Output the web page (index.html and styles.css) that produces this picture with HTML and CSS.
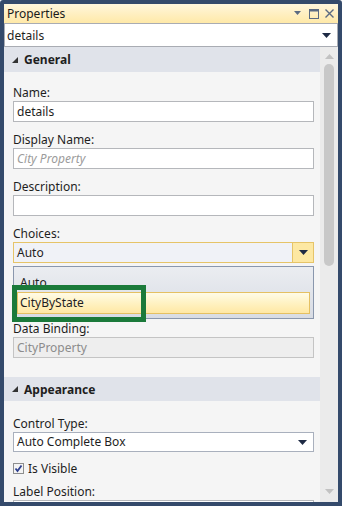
FILE: index.html
```html
<!DOCTYPE html>
<html>
<head>
<meta charset="utf-8">
<link rel="stylesheet" href="styles.css">
</head>
<body>
<div class="window">
  <div class="titlebar">
    <span class="title">Properties</span>
    <div class="tb-btns">
      <svg class="tb-pin" width="8" height="5" viewBox="0 0 8 5"><polygon points="0,0 7,0 3.5,4" fill="#5b6a82"/></svg>
      <svg class="tb-max" width="10" height="10" viewBox="0 0 10 10"><rect x="0.5" y="0.5" width="9" height="9" fill="none" stroke="#5b6a82"/><rect x="0" y="0" width="10" height="2.5" fill="#5b6a82"/></svg>
      <svg class="tb-close" width="9" height="9" viewBox="0 0 9 9"><path d="M0.5 0.5 L8.5 8.5 M8.5 0.5 L0.5 8.5" stroke="#5b6a82" stroke-width="1.4"/></svg>
    </div>
  </div>
  <div class="selector">
    <span>details</span>
    <svg width="9" height="5" viewBox="0 0 9 5"><polygon points="0,0 9,0 4.5,5" fill="#1e2a44"/></svg>
  </div>
  <div class="body">
    <div class="content">
      <div class="section-header">
        <svg width="6" height="6" viewBox="0 0 6 6"><polygon points="6,0 6,6 0,6" fill="#333"/></svg>
        <span>General</span>
      </div>
      <div class="fields general">
        <div class="field">
          <div class="label">Name:</div>
          <div class="input">details</div>
        </div>
        <div class="field">
          <div class="label">Display Name:</div>
          <div class="input placeholder">City Property</div>
        </div>
        <div class="field">
          <div class="label">Description:</div>
          <div class="input"></div>
        </div>
        <div class="field choices">
          <div class="label">Choices:</div>
          <div class="combo active">
            <span class="combo-text">Auto</span>
            <div class="drop-btn"><svg width="9" height="5" viewBox="0 0 9 5"><polygon points="0,0 9,0 4.5,5" fill="#1e2a44"/></svg></div>
          </div>
          <div class="popup">
            <div class="opt">Auto</div>
            <div class="opt sel">CityByState</div>
            <div class="highlight"></div>
          </div>
        </div>
        <div class="field binding">
          <div class="label">Data Binding:</div>
          <div class="input disabled">CityProperty</div>
        </div>
      </div>
      <div class="section-header appearance">
        <svg width="6" height="6" viewBox="0 0 6 6"><polygon points="6,0 6,6 0,6" fill="#333"/></svg>
        <span>Appearance</span>
      </div>
      <div class="fields appear">
        <div class="field">
          <div class="label">Control Type:</div>
          <div class="combo plain">
            <span class="combo-text">Auto Complete Box</span>
            <div class="drop-plain"><svg width="9" height="5" viewBox="0 0 9 5"><polygon points="0,0 9,0 4.5,5" fill="#1e2a44"/></svg></div>
          </div>
        </div>
        <div class="check-row">
          <svg width="11" height="11" viewBox="0 0 11 11">
            <rect x="0.5" y="0.5" width="10" height="10" fill="#f4f4f4" stroke="#8e8f8f"/>
            <path d="M2.5 5.5 L4.5 8 L8.5 2.5" fill="none" stroke="#2d3f8f" stroke-width="1.8"/>
          </svg>
          <span>Is Visible</span>
        </div>
        <div class="field">
          <div class="label">Label Position:</div>
          <div class="input"></div>
        </div>
      </div>
    </div>
    <div class="scrollbar">
      <svg class="sb-arrow up" width="9" height="5" viewBox="0 0 9 5"><polygon points="4.5,0 9,5 0,5" fill="#c2c2c2"/></svg>
      <div class="thumb"></div>
      <div class="sb-spacer"></div>
      <svg class="sb-arrow down" width="9" height="5" viewBox="0 0 9 5"><polygon points="0,0 9,0 4.5,5" fill="#c2c2c2"/></svg>
    </div>
  </div>
</div>
</body>
</html>
```

FILE: styles.css
```css
* { box-sizing: border-box; }
html, body {
  margin: 0;
  padding: 0;
  background: #ffffff;
}
body {
  font-family: "Segoe UI", "Noto Sans", "Open Sans", sans-serif;
  font-size: 12px;
  color: #1e1e1e;
}
.window {
  width: 342px;
  height: 506px;
  border: 4px solid #344a6b;
  border-radius: 3px 3px 0 0;
  display: flex;
  flex-direction: column;
  background: #f5f5f5;
  overflow: hidden;
}
.titlebar {
  height: 19px;
  flex: none;
  display: flex;
  align-items: center;
  justify-content: space-between;
  padding: 0 4px 0 3px;
  background: linear-gradient(#fff6dc, #ffe9a8);
}
.title {
  color: #1a1a1a;
  line-height: 19px;
}
.tb-btns {
  display: flex;
  align-items: center;
  gap: 6px;
}
.tb-pin { margin-right: 1px; }
.selector {
  height: 24px;
  flex: none;
  display: flex;
  align-items: center;
  justify-content: space-between;
  padding: 0 6px 0 2px;
  background: #ffffff;
  border: 1px solid #a9acb3;
}
.body {
  flex: 1;
  display: flex;
  min-height: 0;
}
.content {
  flex: 1;
  overflow: hidden;
  background: #f5f5f5;
}
.section-header {
  height: 25px;
  display: flex;
  align-items: center;
  gap: 6px;
  padding-left: 8px;
  background: #e0e3ea;
  font-weight: bold;
  color: #1e1e1e;
}
.section-header.appearance {
  height: 24px;
  margin-top: 19px;
}
.fields {
  padding: 12px 6px 0 9px;
  display: flex;
  flex-direction: column;
}
.fields.appear { padding-top: 14px; }
.field {
  display: flex;
  flex-direction: column;
  margin-bottom: 9px;
}
.field.choices { margin-bottom: 1px; position: relative; }
.label {
  height: 17px;
  line-height: 17px;
  color: #1e1e1e;
}
.input {
  height: 21px;
  line-height: 19px;
  padding: 0 3px;
  background: #ffffff;
  border: 1px solid #b5b7bb;
  color: #1e1e1e;
}
.input.placeholder {
  color: #9b9b9b;
  font-style: italic;
}
.input.disabled {
  background: #eeeeee;
  border-color: #c4c4c4;
  color: #8c8c8c;
}
.combo {
  height: 21px;
  display: flex;
  align-items: stretch;
  border: 1px solid #b5b7bb;
  background: #ffffff;
}
.combo.plain { height: 20px; border-color: #a9b0bd; }
.combo.active {
  border-color: #e6c468;
  background: #f0f2f7;
}
.combo-text {
  flex: 1;
  line-height: 19px;
  padding-left: 3px;
}
.combo.plain .combo-text { line-height: 18px; }
.drop-btn {
  width: 21px;
  display: flex;
  align-items: center;
  justify-content: center;
  background: #fde8a3;
  border-left: 1px solid #e6c468;
}
.drop-plain {
  width: 21px;
  display: flex;
  align-items: center;
  justify-content: center;
}
.popup {
  position: relative;
  margin-top: 3px;
  height: 53px;
  border: 1px solid #8a97ad;
  background: linear-gradient(#ebedf1, #d8dce4);
  padding: 0 3px 4px 3px;
  display: flex;
  flex-direction: column;
}
.opt {
  height: 24px;
  padding: 6px 3px 0 3px;
  line-height: 19px;
  color: #1e1e1e;
}
.opt.sel {
  height: 22px;
  margin-top: 1px;
  padding: 0 2px;
  line-height: 20px;
  border: 1px solid #e5c062;
  background: linear-gradient(#fffbe7 0%, #fff3c6 45%, #ffe8a4 100%);
}
.highlight {
  position: absolute;
  left: -2px;
  top: 18px;
  width: 134px;
  height: 37px;
  border: 5px solid #1b7a3a;
}
.field.binding { margin-bottom: 0; }
.check-row {
  display: flex;
  align-items: center;
  gap: 4px;
  height: 17px;
  margin: -1px 0 6px 0;
}
.scrollbar {
  width: 18px;
  flex: none;
  background: #ebebeb;
  display: flex;
  flex-direction: column;
  align-items: center;
}
.sb-arrow.up { margin-top: 7px; }
.thumb {
  margin-top: 5px;
  width: 10px;
  height: 202px;
  border-radius: 5px;
  background: #c8c8c8;
}
.sb-spacer { flex: 1; }
.sb-arrow.down { margin-bottom: 8px; }
```
